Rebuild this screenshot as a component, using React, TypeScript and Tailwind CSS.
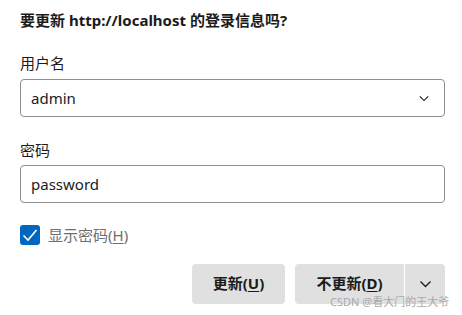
const font = {
  fontFamily: '"Noto Sans", "Noto Sans CJK SC", sans-serif',
};

function Chevron({ className }: { className?: string }) {
  return (
    <svg viewBox="0 0 12 8" className={className} fill="none" stroke="currentColor" strokeWidth="1.3">
      <path d="M1 1.5 L6 6.5 L11 1.5" />
    </svg>
  );
}

export default function App() {
  return (
    <div
      className="relative w-[462px] h-[315px] bg-white text-[#1b1b1b] pl-[20px] pr-[17px] pt-[9px] overflow-hidden"
      style={font}
    >
      {/* Titel */}
      <h1 className="text-[15px] font-bold leading-[22px]">要更新 http://localhost 的登录信息吗?</h1>

      {/* Benutzername */}
      <label className="block mt-[21px] text-[15px] leading-[22px]">用户名</label>
      <div className="mt-[5px] h-[38px] w-full rounded-[4px] border border-[#8f8f8f] flex items-center justify-between pl-[10px] pr-[15px]">
        <span className="text-[15px]">admin</span>
        <Chevron className="w-[10px] h-[7px] text-[#1b1b1b]" />
      </div>

      {/* Passwort */}
      <label className="block mt-[22px] text-[15px] leading-[22px]">密码</label>
      <div className="mt-[4px] h-[38px] w-full rounded-[4px] border border-[#8f8f8f] flex items-center pl-[10px]">
        <span className="text-[15px]">password</span>
      </div>

      <div className="mt-[21px] flex items-center gap-[8px]">
        <span className="shrink-0 w-[20px] h-[20px] rounded-[3px] bg-[#0067c0] flex items-center justify-center">
          <svg viewBox="0 0 20 20" className="w-[20px] h-[20px]" fill="none" stroke="white" strokeWidth="1.6">
            <path d="M3.5 10.5 L8 15 L16.5 5" />
          </svg>
        </span>
        <span className="text-[15px] text-[#6e6e6e]">
          显示密码(<span className="underline underline-offset-2">H</span>)
        </span>
      </div>

      {/* Schaltflächen */}
      <div className="mt-[17px] flex justify-end gap-[10px]">
        <button className="w-[93px] h-[40px] rounded-[4px] bg-[#e0e0e0] text-[15px] font-bold">
          更新(<span className="underline underline-offset-2">U</span>)
        </button>
        <div className="flex h-[40px] rounded-[4px] bg-[#e0e0e0] overflow-hidden">
          <button className="w-[109px] text-[15px] font-bold">
            不更新(<span className="underline underline-offset-2">D</span>)
          </button>
          <div className="w-[1px] bg-white" />
          <button className="w-[40px] flex items-center justify-center">
            <Chevron className="w-[13px] h-[8px] text-[#1b1b1b]" />
          </button>
        </div>
      </div>

      <span className="absolute left-[330px] top-[294px] text-[11px] text-[#a9a9a9] whitespace-nowrap">
        CSDN @看大门的王大爷
      </span>
    </div>
  );
}
